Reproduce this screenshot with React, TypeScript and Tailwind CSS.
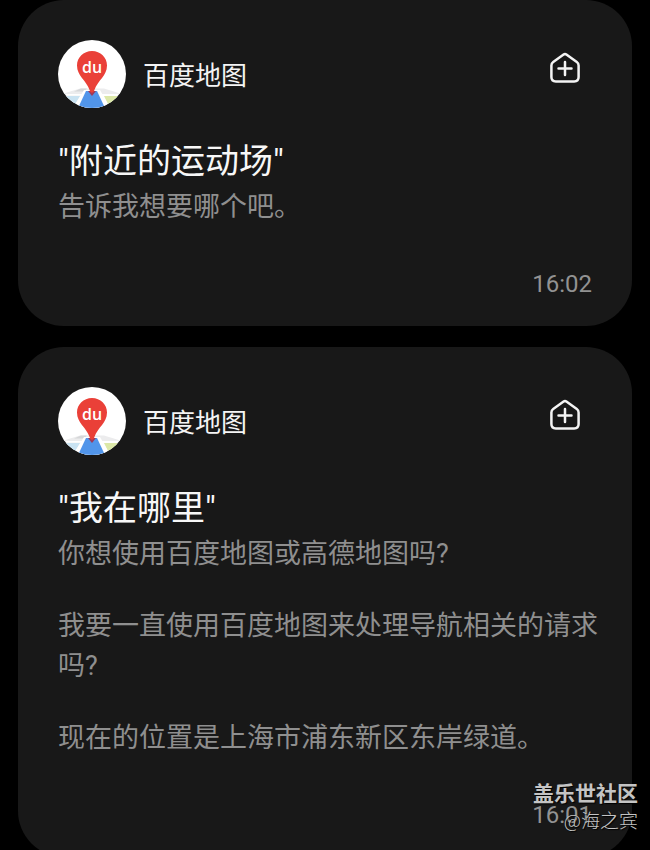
import React from 'react';

interface VoiceCard {
    id: number;
    query: string;
    replies: string[];
    time: string;
}

const cards: VoiceCard[] = [
    {
        id: 1,
        query: '"附近的运动场"',
        replies: ['告诉我想要哪个吧。'],
        time: '16:02',
    },
    {
        id: 2,
        query: '"我在哪里"',
        replies: [
            '你想使用百度地图或高德地图吗?',
            '我要一直使用百度地图来处理导航相关的请求吗?',
            '现在的位置是上海市浦东新区东岸绿道。',
        ],
        time: '16:01',
    },
];

const MapLogo: React.FC = () => (
    <svg viewBox="0 0 68 68" className="size-[68px] shrink-0 rounded-full bg-white" aria-hidden="true">
        <path d="M4 54 L22 48.5 H46 L64 54 Z" fill="#ececed" />
        <path d="M16 51.5 L23 48.5 H29 L26 51.5 Z" fill="#d6d7d9" />
        <path d="M0 55.5 H23 L14 68 H0 Z" fill="#f3f3f1" />
        <path d="M2 56 H22 L16 66 L6 60 Z" fill="#c9e3f2" />
        <path d="M46 56 H66 L60 62 L51 66 Z" fill="#dce8a8" />
        <path d="M26 50 H42 L52 68 H15 Z" fill="#ffffff" />
        <path d="M28 51 H39 L47 68 H20 Z" fill="#5195ea" />
        <path d="M30 51 L34 56 L38 51 Z" fill="#a13a58" />
        <path
            d="M34 11 C25.5 11 19 17.5 19 25.5 C19 36 28 40 31.6 50 C32.4 53.5 35.6 53.5 36.4 50 C40 40 49 36 49 25.5 C49 17.5 42.5 11 34 11 Z"
            fill="#ea4038"
        />
        <text x="34" y="33" textAnchor="middle" fontSize="16" fontWeight="600" fontFamily="'Open Sans', 'Noto Sans', sans-serif" fill="#fff">
            du
        </text>
    </svg>
);

const AddHomeIcon: React.FC = () => (
    <svg
        viewBox="0 0 32 32"
        className="size-8"
        fill="none"
        stroke="currentColor"
        strokeWidth="2.5"
        strokeLinecap="round"
        strokeLinejoin="round"
        aria-hidden="true"
    >
        <path d="M14.6 2.6 L4.2 10 Q2.4 11.3 2.4 13.4 V25 Q2.4 29.4 6.8 29.4 H25.2 Q29.6 29.4 29.6 25 V13.4 Q29.6 11.3 27.8 10 L17.4 2.6 Q16 1.6 14.6 2.6 Z" />
        <path d="M16 10 V23 M9.5 16.5 H22.5" />
    </svg>
);

const Card: React.FC<{ card: VoiceCard }> = ({ card }) => (
    <article className="rounded-[46px] bg-[#181818] px-10 pt-10 pb-7">
        <header className="flex items-start justify-between">
            <div className="flex items-center gap-[17px]">
                <MapLogo />
                <span className="pt-1 text-[26px] leading-10 text-[#f4f4f4]">百度地图</span>
            </div>
            <button type="button" aria-label="添加到主屏幕" className="flex h-14 w-[54px] items-center justify-center text-[#f4f4f4]">
                <AddHomeIcon />
            </button>
        </header>
        <h2 className="mt-[33px] text-[34px] leading-10 text-[#f7f7f7]">{card.query}</h2>
        {/* full 20-character lines run slightly past the padding */}
        <div className="mt-[6px] -mr-4 flex flex-col gap-8 text-[27px] leading-10 text-[#8f8f8f]">
            {card.replies.map(reply => (
                <p key={reply}>{reply}</p>
            ))}
        </div>
        <time className="mt-[43px] block text-right text-2xl leading-7 text-[#929292]">{card.time}</time>
    </article>
);

export default function App() {
    return (
        <div className="relative h-screen overflow-hidden bg-black font-[Roboto,'Noto_Sans_CJK_SC',sans-serif]" lang="zh-CN">
            <main className="flex flex-col gap-[21px] px-[18px]">
                {cards.map(card => (
                    <Card key={card.id} card={card} />
                ))}
            </main>
            <div className="absolute right-3 bottom-4 text-right font-['Noto_Sans_CJK_SC',sans-serif] text-[#c4c4c4] [text-shadow:1px_1px_1px_#000]">
                <p className="text-[21px] leading-7 font-bold">盖乐世社区</p>
                <p className="text-[19px] leading-7 font-light">@海之宾</p>
            </div>
        </div>
    );
}
